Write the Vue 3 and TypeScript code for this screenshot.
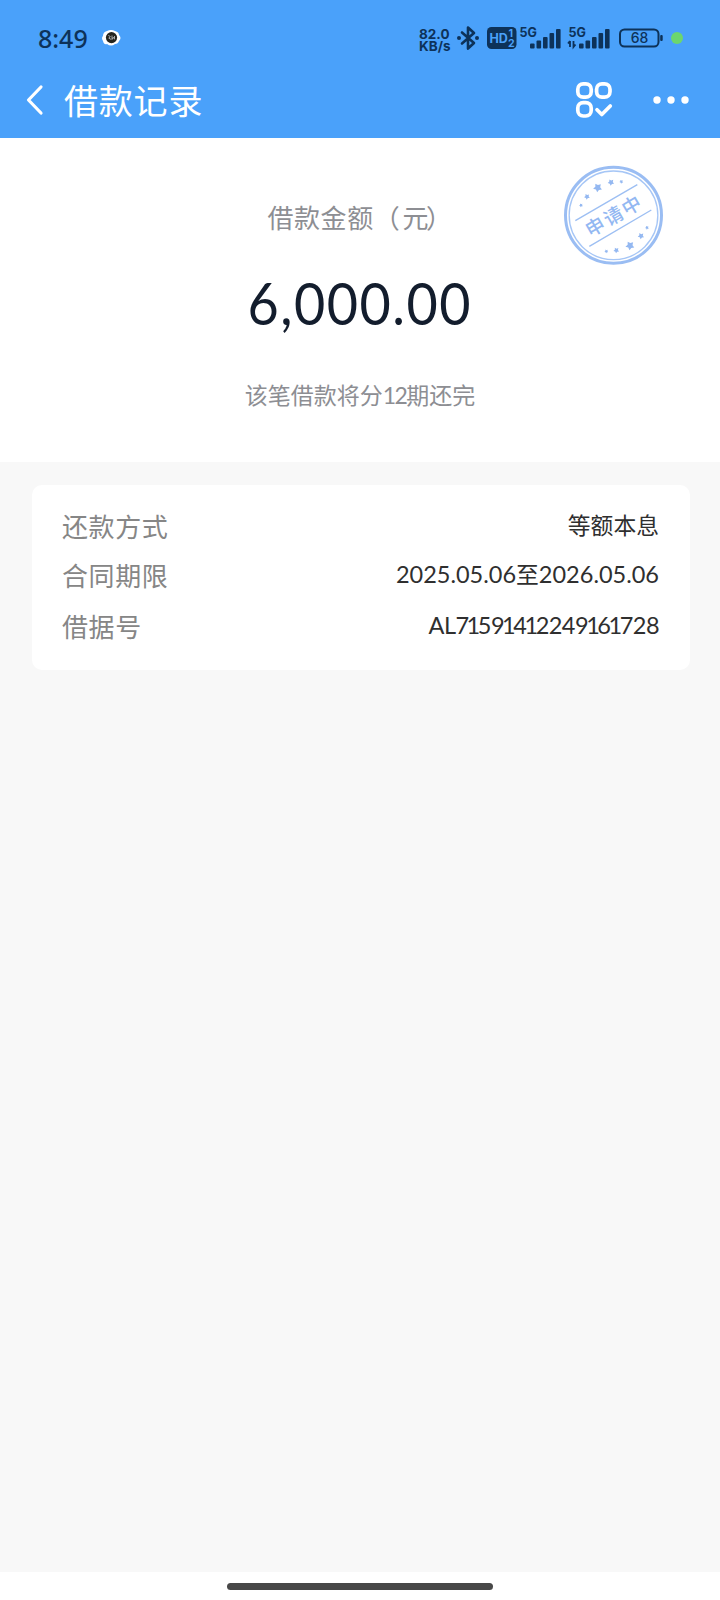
<template>
  <div class="page">
    <!-- Status bar -->
    <header class="status-bar">
      <span class="status-time">8:49</span>
      <svg class="status-app" width="20" height="18" viewBox="0 0 20 18">
        <path d="M6 2Q10 0 14 2Q18 3 18 6Q21 9 18 12Q17 15 14 15Q10 18 6 15Q3 16 2 12Q0 9 2 7Q2 3 6 2Z" fill="#fff" />
        <circle cx="10.5" cy="8.6" r="5.6" fill="#25251f" />
        <path d="M7.3 6.5l2 1-1.5 1.7 2.3 1.2M11 6.5v4l1.2-2.3 1.3 2V7" fill="none" stroke="#aaa" stroke-width="1" />
      </svg>

      <div class="status-icons">
        <div class="net-speed">
          <span>82.0</span>
          <span>KB/s</span>
        </div>
        <svg class="bluetooth" width="24" height="26" viewBox="0 0 24 26">
          <path d="M6 7.5L18 18l-6 5.5v-21l6 5.5L6 18.5" fill="none" stroke="#0d3259" stroke-width="2.6" stroke-linejoin="round" stroke-linecap="round" />
          <circle cx="3" cy="13" r="2" fill="#0d3259" />
          <circle cx="21" cy="13" r="2" fill="#0d3259" />
        </svg>
        <svg class="hd" width="30" height="22" viewBox="0 0 30 22">
          <rect width="29.5" height="22" rx="4.5" fill="#0d3259" />
          <text x="2.6" y="15.5" class="hd-text">HD</text>
          <text x="21.6" y="10.4" class="hd-sim">1</text>
          <text x="21" y="19.6" class="hd-sim">2</text>
        </svg>
        <svg v-for="sim in sims" :key="sim.id" class="signal" width="44" height="24" viewBox="0 0 44 24">
          <text x="1.5" y="11" class="signal-text">5G</text>
          <path v-if="sim.active" d="M3 15v6M1 17.5L3 15M6.5 15v6l2-2.5" fill="none" stroke="#0d3259" stroke-width="1.8" />
          <rect
            v-for="(bar, i) in bars"
            :key="i"
            :x="12 + i * 6.5"
            :y="22.5 - bar"
            width="4.6"
            :height="bar"
            rx="1"
            fill="#0d3259"
          />
        </svg>
        <svg class="battery" width="46" height="20" viewBox="0 0 46 20">
          <rect x="1" y="1.5" width="38.5" height="17" rx="4.5" fill="none" stroke="#0d3259" stroke-width="2" />
          <rect x="41.2" y="7" width="2.5" height="6" rx="1" fill="#0d3259" />
          <text x="20.5" y="15.2" class="battery-text">68</text>
        </svg>
        <span class="mic-dot" />
      </div>
    </header>

    <!-- Nav bar -->
    <nav class="nav-bar">
      <svg class="nav-back" width="20" height="32" viewBox="0 0 20 32">
        <path d="M16 3L3.5 16 16 29" fill="none" stroke="#fff" stroke-width="3.2" stroke-linecap="round" stroke-linejoin="round" />
      </svg>
      <h1 class="nav-title">借款记录</h1>
      <svg class="nav-apps" width="38" height="38" viewBox="0 0 38 38" fill="none" stroke="#fff" stroke-width="3.7">
        <rect x="2.8" y="2.8" width="13.4" height="13.4" rx="5.4" />
        <rect x="21.6" y="2.8" width="13.4" height="13.4" rx="5.4" />
        <rect x="2.8" y="21.6" width="13.4" height="13.4" rx="5.4" />
        <path d="M22 28.8l4.8 4.7L35.3 25" stroke-linecap="round" stroke-linejoin="round" />
      </svg>
      <svg class="nav-more" width="38" height="8" viewBox="0 0 38 8" fill="#fff">
        <circle cx="5" cy="4" r="3.7" />
        <circle cx="19" cy="4" r="3.7" />
        <circle cx="33" cy="4" r="3.7" />
      </svg>
    </nav>

    <!-- Amount -->
    <section class="summary">
      <p class="summary-label">借款金额<span class="summary-open">（</span>元<span class="summary-close">）</span></p>
      <p class="summary-amount">{{ amount }}</p>
      <p class="summary-note">该笔借款将分<span class="summary-count">12</span>期还完</p>

      <!-- Status stamp -->
      <svg class="stamp" width="130" height="130" viewBox="0 0 390 390">
        <circle cx="190.5" cy="196" r="144" fill="none" stroke="#9abdf3" stroke-width="9" />
        <circle cx="190.5" cy="196" r="133" fill="none" stroke="#a6c6f6" stroke-width="4" />
        <path d="M76 212L262 104M118 289L304 180" stroke="#9dbff3" stroke-width="4" />
        <path v-for="(s, i) in stars" :key="i" :d="starPath(s)" fill="#94b8f1" />
        <text x="193" y="219" transform="rotate(-30.5 190 198)" class="stamp-text">申请中</text>
      </svg>
    </section>

    <!-- Details -->
    <section class="card">
      <div v-for="row in rows" :key="row.label" class="row">
        <span class="row-label">{{ row.label }}</span>
        <span class="row-value">
          <span v-for="(part, i) in splitValue(row.value)" :key="i" :class="partClass(part)">{{ part }}</span>
        </span>
      </div>
    </section>

    <footer class="home-bar">
      <div class="home-indicator" />
    </footer>
  </div>
</template>

<script setup lang="ts">
interface Row {
  label: string
  value: string
}

interface Star {
  x: number
  y: number
  r: number
}

const amount = '6,000.00'

const rows: Row[] = [
  { label: '还款方式', value: '等额本息' },
  { label: '合同期限', value: '2025.05.06至2026.05.06' },
  { label: '借据号', value: 'AL71591412249161728' },
]

const sims = [
  { id: 1, active: false },
  { id: 2, active: true },
]

const bars = [5, 8, 11.5, 15.5, 19.5]

const stars: Star[] = [
  { x: 93, y: 166, r: 6 },
  { x: 111, y: 140, r: 9 },
  { x: 143, y: 113, r: 14 },
  { x: 183, y: 97, r: 10 },
  { x: 214, y: 95, r: 6 },
  { x: 169, y: 304, r: 6 },
  { x: 199, y: 301, r: 9 },
  { x: 240, y: 287, r: 14 },
  { x: 273, y: 258, r: 10 },
  { x: 291, y: 233, r: 6 },
]

/** Split out Chinese runs and the digit 1, which is set narrower */
const splitValue = (value: string) => value.split(/([\u4e00-\u9fff]+|1)/).filter(Boolean)

const partClass = (part: string) => {
  if (part === '1') return 'row-one'
  return /[\u4e00-\u9fff]/.test(part) ? 'row-cjk' : 'row-latin'
}

/** Five-pointed star, tilted along with the stamp */
function starPath({ x, y, r }: Star): string {
  const points: string[] = []
  for (let i = 0; i < 10; i++) {
    const radius = i % 2 ? r * 0.55 : r
    const angle = (i * 36 - 120) * Math.PI / 180
    points.push(`${(x + radius * Math.cos(angle)).toFixed(1)} ${(y + radius * Math.sin(angle)).toFixed(1)}`)
  }
  return `M${points.join('L')}Z`
}
</script>

<style>
body {
  margin: 0;
  background: #f8f8f8;
}
</style>

<style scoped>
.page {
  display: flex;
  flex-direction: column;
  width: 720px;
  height: 1600px;
  background: #f8f8f8;
  font-family: Lato, "Noto Sans CJK SC", sans-serif;
  overflow: hidden;
}

/* ── Status bar ────────────────────────────────────────────── */
.status-bar {
  display: flex;
  align-items: center;
  box-sizing: border-box;
  height: 76px;
  padding: 0 37px 0 38px;
  background: #4aa1fa;
  color: #0d3259;
  flex-shrink: 0;
}

.status-time {
  width: 63px;
  padding-bottom: 1px;
  font-family: "Noto Sans", sans-serif;
  font-size: 25px;
  font-weight: 500;
  line-height: 30px;
}

.status-icons {
  display: flex;
  align-items: center;
  margin-left: auto;
}

.net-speed {
  display: flex;
  flex-direction: column;
  width: 37px;
  padding-top: 3px;
  font-family: Inter, sans-serif;
  font-size: 13.5px;
  font-weight: 700;
  line-height: 12px;
}

.bluetooth { margin-right: 7px; }

.hd { margin-right: 1px; }

.hd-text {
  font: 700 12.5px Inter, sans-serif;
  fill: #4aa1fa;
  letter-spacing: -0.2px;
}

.hd-sim {
  font: 700 10.5px Inter, sans-serif;
  fill: #4aa1fa;
}

.signal { margin-right: 5px; }

.signal:nth-last-child(3) { margin-right: 8px; }

.signal-text {
  font: 700 12.5px Inter, sans-serif;
  fill: #0d3259;
}

.battery { margin-right: 6px; }

.battery-text {
  font: 500 14px Inter, sans-serif;
  fill: #0d3259;
  text-anchor: middle;
}

.mic-dot {
  width: 12px;
  height: 12px;
  border-radius: 50%;
  background: #6cd66e;
}

/* ── Nav bar ───────────────────────────────────────────────── */
.nav-bar {
  display: flex;
  align-items: center;
  box-sizing: border-box;
  height: 62px;
  padding: 0 30px 14px 25px;
  background: #4aa1fa;
  flex-shrink: 0;
}

.nav-title {
  margin: 1px auto 0 19px;
  color: #fff;
  font-size: 34px;
  font-weight: 400;
  line-height: 46px;
  letter-spacing: 0.8px;
}

.nav-apps { margin-right: 39px; }

/* ── Summary ───────────────────────────────────────────────── */
.summary {
  position: relative;
  display: flex;
  flex-direction: column;
  align-items: center;
  box-sizing: border-box;
  height: 324px;
  padding-top: 60px;
  background: #fff;
  flex-shrink: 0;
}

.summary-label {
  margin: 0;
  color: #8d8e93;
  font-size: 26px;
  line-height: 40px;
  letter-spacing: 0.6px;
}

.summary-open { margin-right: 2px; }

.summary-close { margin-left: -3px; }

.summary-amount {
  margin: 29px 0 0;
  color: #131d2d;
  font-size: 58px;
  line-height: 72px;
  letter-spacing: 1.6px;
  transform: scaleX(0.93);
}

.summary-note {
  margin: 40px 0 0;
  color: #8d8e93;
  font-size: 23px;
  line-height: 32px;
}

.summary-count { letter-spacing: -1.5px; }

.stamp {
  position: absolute;
  top: 12px;
  right: 40px;
}

.stamp-text {
  font: 500 57px "Noto Sans CJK SC", sans-serif;
  fill: #93b8f2;
  text-anchor: middle;
  letter-spacing: 6px;
}

/* ── Card ──────────────────────────────────────────────────── */
.card {
  display: flex;
  flex-direction: column;
  box-sizing: border-box;
  height: 185px;
  margin: 23px 30px 0 32px;
  padding: 17px 31px 0 30px;
  border-radius: 10px;
  background: #fff;
  flex-shrink: 0;
}

.row {
  display: flex;
  justify-content: space-between;
  height: 50px;
}

.row-label {
  color: #868686;
  font-size: 26px;
  line-height: 50px;
  letter-spacing: 0.6px;
}

.row-value {
  color: #2f2f2f;
  font-size: 23.5px;
  line-height: 47px;
}

.row:nth-child(2) { margin-top: -1px; }

.row:nth-child(3) {
  margin-top: 1px;
}

.row:nth-child(3) .row-value { letter-spacing: -0.55px; }

.row-cjk { font-size: 22.8px; }

/* Pulls the neighbouring digits in around a 1 */
.row-one { margin: 0 -1.9px; }

/* ── Home indicator ────────────────────────────────────────── */
.home-bar {
  display: flex;
  justify-content: center;
  box-sizing: border-box;
  height: 28px;
  margin-top: auto;
  padding-top: 11px;
  background: #fff;
}

.home-indicator {
  width: 266px;
  height: 7px;
  border-radius: 4px;
  background: #484848;
}
</style>
